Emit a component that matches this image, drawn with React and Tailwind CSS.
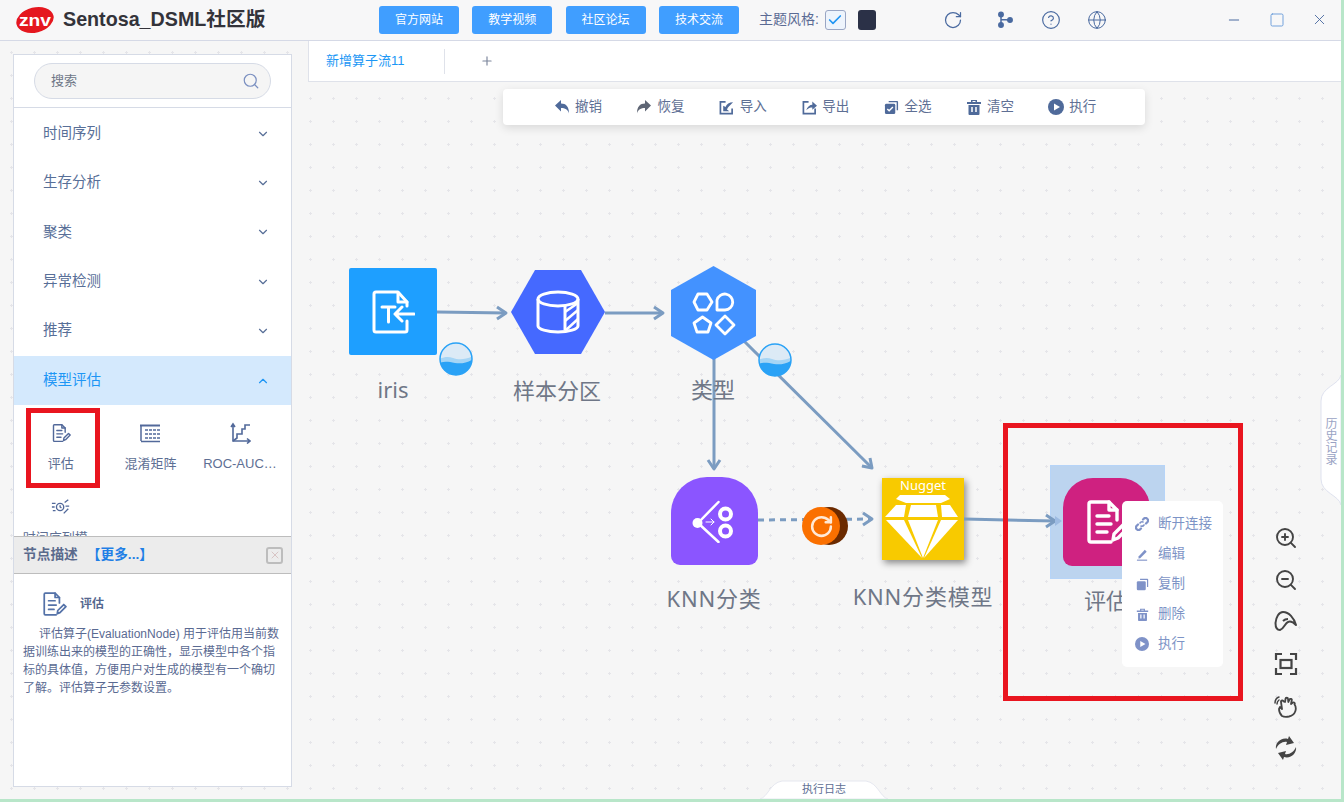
import { ChevronDown, ChevronUp, Search, RotateCw, CircleHelp, Globe, Minus, Square, X, Plus, ZoomIn, ZoomOut, Check } from "lucide-react";

const cjk = "font-['Liberation_Sans','Noto_Sans_CJK_SC',sans-serif]";
const nodeFont = "font-['Noto_Sans','Noto_Sans_CJK_SC',sans-serif]";

function DocEdit({ className, sw = 2, color = "currentColor" }) {
  return (
    <svg viewBox="0 0 24 24" className={className} fill="none" stroke={color} strokeWidth={sw} strokeLinejoin="round" strokeLinecap="round">
      <path d="M17 11V6l-4-4H4a1 1 0 0 0-1 1v18a1 1 0 0 0 1 1h10" />
      <path d="M13 2v4h4M7 9h6M7 13h7M7 17h5" />
      <path d="M15 21l.5-3 5.5-5.500 2 2-5.500 5.500z" />
    </svg>
  );
}

function Ball({ id }) {
  return (
    <svg viewBox="0 0 34 34" className="w-full h-full">
      <defs>
        <clipPath id={id}>
          <circle cx="17" cy="17" r="16" />
        </clipPath>
      </defs>
      <g clipPath={`url(#${id})`}>
        <rect width="34" height="34" fill="#dceaf6" />
        <path d="M0 17c5-2 9-3 14-1s13 2 20-2v20H0z" fill="#a6d5f5" />
        <path d="M0 21c6-2 10-1 16 0s12 0 18-4v17H0z" fill="#2aa2f6" />
      </g>
      <circle cx="17" cy="17" r="16" fill="none" stroke="#2aa2f6" strokeWidth="1.500" />
    </svg>
  );
}

function Label({ children, className = "" }) {
  return <div className={`${nodeFont} text-[22px] leading-[30px] text-[#6f7787] text-center whitespace-nowrap ${className}`}>{children}</div>;
}

function SideRow({ text, open }) {
  return (
    <div className={`h-[49.400px] shrink-0 flex items-center justify-between pl-[29px] pr-[21px] text-[14.500px] ${open ? "bg-[#d4e9fd] text-[#1e96f5]" : "text-[#586f98]"}`}>
      <span>{text}</span>
      {open ? <ChevronUp size={14} /> : <ChevronDown size={14} />}
    </div>
  );
}

function ToolItem({ icon, text }) {
  return (
    <div className="flex items-center w-[82.400px] shrink-0 gap-[5px]">
      <span className="w-[16px] h-[16px] flex items-center justify-center text-[#4f6a9a]">{icon}</span>
      <span className="text-[13.500px] text-[#5e6f94]">{text}</span>
    </div>
  );
}

function MenuItem({ icon, text }) {
  return (
    <div className="h-[30px] flex items-center pl-[13px] gap-[9px] text-[13.500px] text-[#7d94c6]">
      <span className="w-[14px] h-[14px] flex items-center justify-center text-[#7f92c8]">{icon}</span>
      <span>{text}</span>
    </div>
  );
}

function SubItem({ icon, text, labelClass = "w-[74px]" }) {
  return (
    <div className="flex flex-col items-center h-[74px] pt-[17px] overflow-hidden">
      <span className="w-[22px] h-[22px] flex items-center justify-center text-[#52699a]">{icon}</span>
      <span className={`mt-[11px] text-center truncate text-[13px] leading-[18px] text-[#5e6f94] ${labelClass}`}>{text}</span>
    </div>
  );
}

function Edge({ d, dash }) {
  return <path d={d} fill="none" stroke="#7b9cc1" strokeWidth="3" strokeDasharray={dash} />;
}

function Head({ d }) {
  return <path d={d} fill="none" stroke="#7b9cc1" strokeWidth="3" strokeLinejoin="round" />;
}

function TrashIcon({ className }) {
  return (
    <svg viewBox="0 0 16 16" className={className} fill="currentColor">
      <path d="M1 3h14v2H1zM5 3V1h6v2H9.500V2h-3v1zM2.500 6h11v9a1 1 0 0 1-1 1h-9a1 1 0 0 1-1-1z" />
      <path d="M6 8v5M10 8v5" stroke="#fff" strokeWidth="1.500" />
    </svg>
  );
}

function CopyIcon({ className }) {
  return (
    <svg viewBox="0 0 16 16" className={className}>
      <path d="M5 1h9a1 1 0 0 1 1 1v9h-1.500V2.500H5z" fill="currentColor" />
      <rect x="1" y="4" width="11" height="11" rx="1.500" fill="currentColor" />
    </svg>
  );
}

function PlayIcon({ className }) {
  return (
    <svg viewBox="0 0 16 16" className={className}>
      <circle cx="8" cy="8" r="8" fill="currentColor" />
      <polygon points="6,4.500 12,8 6,11.500" fill="#fff" />
    </svg>
  );
}

export default function App() {
  return (
    <div className={`${cjk} w-[1344px] h-[802px] overflow-hidden flex flex-col bg-[#f6f6f6] border-r-[3px] border-b-[3px] border-[#b8e6c9] relative`}>
      {/* header */}
      <div className="h-[41px] shrink-0 flex items-center bg-[#f7f7f8] border-b border-[#d5d9e6] pb-[1px]">
        <svg viewBox="0 0 38 28" className="w-[38px] h-[28px] ml-[16px]">
          <ellipse cx="19" cy="14" rx="19" ry="12.500" transform="rotate(-14 19 14)" fill="#e5171f" />
          <text x="19" y="19.500" textAnchor="middle" fontSize="17" fontWeight="700" fill="#fff" fontFamily="Liberation Sans" textLength="32" lengthAdjust="spacingAndGlyphs">znv</text>
        </svg>
        <div className="ml-[9px] w-[316px] text-[19.700px] font-bold text-[#33333a] whitespace-nowrap">Sentosa_DSML社区版</div>
        <div className="flex gap-[13.300px]">
          {["官方网站", "教学视频", "社区论坛", "技术交流"].map((t) => (
            <div key={t} className="w-[80px] h-[28px] rounded-[3px] bg-[#409eff] flex items-center justify-center text-[12px] text-white">{t}</div>
          ))}
        </div>
        <div className="ml-[20px] text-[14px] text-[#5b6b94] whitespace-nowrap">主题风格:</div>
        <div className="ml-[6px] w-[21px] h-[20px] rounded-[3px] border border-[#9aa6c4] bg-[#eef4fc] flex items-center justify-center">
          <Check size={16} className="text-[#2196f3]" strokeWidth={2.500} />
        </div>
        <div className="ml-[12px] w-[18px] h-[20px] rounded-[3px] bg-[#2b3147]" />
        <div className="ml-[67px] flex items-center text-[#4a6aa0]">
          <RotateCw size={20} strokeWidth={1.500} />
          <svg viewBox="0 0 20 20" className="w-[20px] h-[20px] ml-[32px]" fill="#4a6aa0" stroke="#4a6aa0" strokeWidth="1.500">
            <circle cx="6" cy="4.500" r="2.200" />
            <circle cx="6" cy="15" r="2.200" />
            <circle cx="15" cy="10" r="2.200" />
            <path d="M6 5v10M6 9.500l9 .5" fill="none" />
          </svg>
          <CircleHelp size={20} strokeWidth={1.400} className="ml-[26px]" />
          <Globe size={20} strokeWidth={1.200} className="ml-[26px]" />
        </div>
        <div className="ml-auto flex items-center text-[#4a6aa0]">
          <Minus size={16} strokeWidth={1.500} />
          <Square size={16} strokeWidth={1.300} className="ml-[27px] text-[#5f96d8]" />
          <X size={17} strokeWidth={1.300} className="ml-[26px] mr-[13px]" />
        </div>
      </div>

      {/* body */}
      <div className="flex-1 flex min-h-0 bg-[radial-gradient(#e5e5e9_1.200px,transparent_1.200px)] bg-[size:23px_23px]">
        {/* sidebar */}
        <div className="w-[308px] shrink-0 pl-[13px] pr-[16px] pt-[13px] pb-[12px] flex">
          <div className="w-full flex flex-col bg-white border border-[#d6dbe6] min-h-0">
            <div className="h-[53px] shrink-0 flex items-center pl-[20px] border-b border-[#d6dbe6]">
              <div className="w-[237px] h-[36px] rounded-[18px] bg-[#f5f5f5] border border-[#d6dbe6] flex items-center justify-between pl-[16px] pr-[10px]">
                <span className="text-[13px] text-[#6f7787]">搜索</span>
                <Search size={18} className="text-[#7a8fc0]" strokeWidth={1.600} />
              </div>
            </div>
            <div className="flex-1 min-h-0 overflow-hidden pt-[1px]">
              <SideRow text="时间序列" />
              <SideRow text="生存分析" />
              <SideRow text="聚类" />
              <SideRow text="异常检测" />
              <SideRow text="推荐" />
              <SideRow text="模型评估" open />
              <div className="grid grid-cols-3 pl-[2px] pr-[6px] relative">
                <SubItem text="评估" icon={<DocEdit className="w-[20px] h-[20px]" sw={1.700} />} />
                <SubItem
                  text="混淆矩阵"
                  icon={
                    <svg viewBox="0 0 22 22" className="w-[22px] h-[22px]" fill="none" stroke="currentColor" strokeWidth="1.500">
                      <path d="M1 3.500h20" strokeWidth="2" />
                      <path d="M2 3v16" />
                      <path d="M6 8h15M6 12h15M6 16h15" strokeDasharray="3 1" />
                      <path d="M2 19.500h19" />
                    </svg>
                  }
                />
                <SubItem
                  text="ROC-AUC曲线图"
                  icon={
                    <svg viewBox="0 0 22 22" className="w-[22px] h-[22px]" fill="none" stroke="currentColor" strokeWidth="1.600">
                      <path d="M4 2v17h17M2 5l2-3 2 3M18 16.500l3 2.500-3 2.500" />
                      <path d="M4 19l4-3v-4h5V7h3V3h5" />
                    </svg>
                  }
                />
                <SubItem
                  text="时间序列模型评估"
                  labelClass="w-[80px] ml-[4px]"
                  icon={
                    <svg viewBox="0 0 22 22" className="w-[20px] h-[20px]" fill="none" stroke="currentColor" strokeWidth="1.500">
                      <circle cx="10" cy="11" r="4" />
                      <path d="M10 9v2l1.500 1M1 7h4M1 11h3M2 15h3M15 6l4-3M16 10h4M14 18l5-5" />
                    </svg>
                  }
                />
              </div>
            </div>
            <div className="h-[250px] shrink-0 bg-white flex flex-col">
              <div className="h-[38px] shrink-0 bg-[#ececec] border-y border-[#bdbdbd] flex items-center pl-[9px] pr-[8px] text-[13.700px] font-bold text-[#5a6a8c]">
                <span>节点描述</span>
                <span className="ml-[9px] text-[#1f7fe6]">【更多...】</span>
                <span className="ml-auto w-[17px] h-[17px] rounded-[3px] border-2 border-[#bdbdbd] flex items-center justify-center">
                  <X size={12} className="text-[#d8c4c4]" />
                </span>
              </div>
              <div className="flex items-center pl-[27px] pt-[17px]">
                <DocEdit className="w-[26px] h-[26px] text-[#5472a8]" sw={1.600} />
                <span className="ml-[13px] text-[12px] font-bold text-[#55688f]">评估</span>
              </div>
              <p className="mx-[9px] mt-[8px] text-[12px] leading-[18px] indent-[16px] text-[#5a6a92]">
                评估算子(EvaluationNode) 用于评估用当前数据训练出来的模型的正确性，显示模型中各个指标的具体值，方便用户对生成的模型有一个确切了解。评估算子无参数设置。
              </p>
            </div>
          </div>
        </div>

        {/* right column */}
        <div className="flex-1 min-w-0 flex flex-col">
          <div className="h-[41px] shrink-0 bg-white border-b border-[#dfe2ea] border-l flex items-center">
            <span className="ml-[17px] w-[118px] text-[13px] text-[#1b97f5]">新增算子流11</span>
            <span className="w-px h-[25px] bg-[#dfe2ea]" />
            <Plus size={14} className="ml-[35px] text-[#7c869c]" />
          </div>

          {/* canvas */}
          <div className="flex-1 relative min-h-0">
            <svg viewBox="308 82 1033 717" className="absolute inset-0 w-[1033px] h-[717px]">
              <Edge d="M437 312L506 313" />
              <Head d="M497 307l9 6-9 6" />
              <Edge d="M605 313L663 313" />
              <Head d="M654 307l9 6-9 6" />
              <Edge d="M714 358L714 469" />
              <Head d="M708 460l6 9 6-9" />
              <Edge d="M744 341L872 468" />
              <Head d="M862 466l10 2-2-10" />
              <Edge d="M758 520L872 519" dash="6 5" />
              <Head d="M863 513l9 6-9 6" />
            </svg>

            {/* iris */}
            <div className="absolute left-[-20px] top-[186px] w-[210px] flex flex-col items-center">
              <div className="w-[88px] h-[87px] rounded-[2px] bg-[#1e9fff] flex items-center justify-center">
                <svg viewBox="0 0 44 44" className="w-[44px] h-[44px]" fill="none" stroke="#fff" strokeWidth="3" strokeLinecap="round" strokeLinejoin="round">
                  <path d="M36 16v-4l-9-10H5a2 2 0 0 0-2 2v36a2 2 0 0 0 2 2h29a2 2 0 0 0 2-2v-9" />
                  <path d="M27 3v9h9M11 17h13M17.500 17v15M43 24H24M31 17l-7 7 7 7" />
                </svg>
              </div>
              <Label className="mt-[19px]">iris</Label>
            </div>

            {/* sample partition */}
            <div className="absolute left-[145px] top-[188px] w-[210px] flex flex-col items-center">
              <svg viewBox="0 0 94 84" className="w-[94px] h-[84px]">
                <polygon points="0,42 24,0 70,0 94,42 70,84 24,84" fill="#4569ff" />
                <g fill="none" stroke="#fff" strokeWidth="3">
                  <ellipse cx="47" cy="29" rx="20" ry="7" />
                  <path d="M27 29v27c0 3 9 6 20 6s20-3 20-6V29" />
                  <path d="M54 60V35" />
                  <path d="M54 42l13-9M54 51l13-11M55 60l12-11" strokeWidth="2.500" />
                </g>
              </svg>
              <Label className="mt-[21px] -ml-[2px]">样本分区</Label>
            </div>

            {/* type */}
            <div className="absolute left-[300px] top-[184px] w-[210px] flex flex-col items-center">
              <svg viewBox="0 0 85 94" className="w-[85px] h-[94px]">
                <polygon points="42.500,0 85,24 85,70 42.500,94 0,70 0,24" fill="#4392ff" />
                <g fill="none" stroke="#fff" strokeWidth="2.800" strokeLinejoin="round">
                  <polygon points="27,28 36,28 41,36 36,44 27,44 23,36" />
                  <path d="M46 44V34a8 8 0 1 1 8 10z" />
                  <polygon points="31.500,51 40,57 37,66 26,66 23,57" />
                  <polygon points="54,50 63,59 54,68 45,59" />
                </g>
              </svg>
              <Label className="mt-[14px]">类型</Label>
            </div>

            {/* knn */}
            <div className="absolute left-[301px] top-[395px] w-[210px] flex flex-col items-center">
              <div className="w-[87px] h-[88px] bg-[#8b55ff] rounded-t-[36px] rounded-b-[9px] flex items-center justify-center">
                <svg viewBox="0 0 44 44" className="w-[44px] h-[44px]" fill="none" stroke="#fff" strokeWidth="2.500" strokeLinecap="round">
                  <circle cx="5.500" cy="24" r="5" fill="#fff" stroke="none" />
                  <path d="M6 24L26.500 3M6 24l20.500 19" />
                  <circle cx="33.500" cy="15" r="5.500" strokeWidth="4" />
                  <circle cx="33.500" cy="32" r="5.500" strokeWidth="4" />
                  <path d="M14 23h8M19 20l3 3-3 3" strokeWidth="1" />
                </svg>
              </div>
              <Label className="mt-[18px] tracking-[0.8px]">KNN分类</Label>
            </div>

            {/* restart badge */}
            <div className="absolute left-[494px] top-[425px] w-[46px] h-[38px]">
              <div className="absolute right-0 top-0 w-[38px] h-[38px] rounded-full bg-[#6b2a00]" />
              <div className="absolute left-0 top-0 w-[38px] h-[38px] rounded-full bg-[#fa7000] flex items-center justify-center">
                <RotateCw size={25} strokeWidth={2.400} className="text-[#ffe9d6]" />
              </div>
            </div>

            {/* nugget */}
            <div className="absolute left-[510px] top-[396px] w-[210px] flex flex-col items-center">
              <div className="w-[82px] h-[82px] bg-[#f8ca00] shadow-[2px_3px_7px_rgba(0,0,0,0.45)] flex flex-col items-center">
                <span className="text-[13px] leading-[14px] text-white font-['Noto_Sans',sans-serif]">Nugget</span>
                <svg viewBox="882 492 82 68" className="w-[82px] h-[68px]" fill="#fff">
                  <polygon points="900,495 945,495 950,499 941,503 906,503 896,499" />
                  <polygon points="896,505 906,505 904,517 885,517" />
                  <polygon points="911,505 936,505 938,517 908,517" />
                  <polygon points="941,505 950,505 958,517 942,517" />
                  <polygon points="886,520 904,520 922,558" />
                  <polygon points="908,520 938,520 923,558" />
                  <polygon points="941,520 958,520 924,558" />
                </svg>
              </div>
              <Label className="mt-[21px] tracking-[0.8px]">KNN分类模型</Label>
            </div>

            {/* evaluate, selected */}
            <div className="absolute left-[742px] top-[383px] w-[115px] h-[114px] bg-[#bcd4ef] border border-[#b6d4f8] flex items-center pl-[12px]">
              <div className="w-[87px] h-[88px] bg-[#cf2180] rounded-tl-[30px] rounded-tr-[30px] rounded-bl-[9px] rounded-br-[9px] flex items-center justify-center">
                <DocEdit className="w-[48px] h-[48px] text-white" sw={1.700} />
              </div>
            </div>
            <div className="absolute left-[693px] top-[503px] w-[210px]">
              <Label>评估</Label>
            </div>

            <svg viewBox="308 82 1033 717" className="absolute inset-0 w-[1033px] h-[717px]">
              <Edge d="M964 519L1055 521" />
              <Head d="M1046 515l9 6-9 6" />
              <polygon points="1055,516 1062,521 1055,526" fill="#9dbbe2" />
            </svg>

            {/* balls */}
            <div className="absolute left-[131px] top-[260px] w-[34px] h-[34px]"><Ball id="ball-a" /></div>
            <div className="absolute left-[450px] top-[261px] w-[34px] h-[34px]"><Ball id="ball-b" /></div>

            {/* context menu */}
            <div className="absolute left-[814px] top-[419px] w-[101px] h-[166px] bg-white rounded-[5px] pt-[8px]">
              <MenuItem
                text="断开连接"
                icon={
                  <svg viewBox="0 0 14 14" className="w-[14px] h-[14px]" fill="none" stroke="currentColor" strokeWidth="2.200" strokeLinecap="round">
                    <path d="M8 2.500l1-1a2.500 2.500 0 0 1 3.500 3.500l-1.500 1.500" />
                    <path d="M6 11.500l-1 1A2.500 2.500 0 0 1 1.500 9L3 7.500" />
                    <path d="M5 6a2.500 2.500 0 0 1 3-1M9 8a2.500 2.500 0 0 1-3 1" strokeWidth="1.600" />
                  </svg>
                }
              />
              <MenuItem
                text="编辑"
                icon={
                  <svg viewBox="0 0 14 14" className="w-[13px] h-[13px]" fill="currentColor">
                    <path d="M3 9l6.500-7 2 2-7 7-2 .3z" />
                    <path d="M1 12.500h11v1.200H1z" />
                  </svg>
                }
              />
              <MenuItem text="复制" icon={<CopyIcon className="w-[13px] h-[13px]" />} />
              <MenuItem text="删除" icon={<TrashIcon className="w-[13px] h-[13px]" />} />
              <MenuItem text="执行" icon={<PlayIcon className="w-[14px] h-[14px]" />} />
            </div>

            {/* history tab */}
            <div className="absolute right-0 top-[293px] w-[21px] h-[130px]">
              <svg viewBox="0 0 21 130" className="absolute inset-0 w-[21px] h-[130px]">
                <path d="M21 0C19 10 1 12 1 26v78c0 14 18 16 20 26z" fill="#fff" stroke="#dfe2ef" />
              </svg>
              <span className="absolute left-[4px] top-[42px] [writing-mode:vertical-rl] text-[12px] leading-[12px] text-[#9aa3c4]">历史记录</span>
            </div>

            {/* zoom tools */}
            <div className="absolute left-[966px] top-[444px] flex flex-col gap-[18px] text-[#444444]">
              <ZoomIn size={24} strokeWidth={1.900} />
              <ZoomOut size={24} strokeWidth={1.900} />
              <svg viewBox="0 0 24 24" className="w-[24px] h-[24px]" fill="none" stroke="currentColor" strokeWidth="2" strokeLinejoin="round">
                <path d="M1.500 13C2 7 5 2 9 2c6 0 11 6 13 13-3-3-6-4-8-3-3 1-4 7-8 8-3 0-4.500-3-4.500-7z" />
                <path d="M9 11c2-2 3-2 5-2" />
              </svg>
              <svg viewBox="0 0 24 24" className="w-[24px] h-[24px]" fill="none" stroke="currentColor" strokeWidth="2.200">
                <path d="M2 8V2h6M16 2h6v6M22 16v6h-6M8 22H2v-6" />
                <rect x="6.500" y="8" width="11" height="8" />
              </svg>
              <svg viewBox="0 0 24 24" className="w-[24px] h-[24px]" fill="none" stroke="currentColor" strokeWidth="1.800" strokeLinecap="round" strokeLinejoin="round">
                <path d="M8 22c-2-2-3-4-3-7l1-2 2 2-1-7a1 1 0 0 1 2.500-.5L11 8l.5-3a1.200 1.200 0 0 1 2.500 0l.3 3 1.200-2.500a1.200 1.200 0 0 1 2.200 1L17 10l2-1.500a1.200 1.200 0 0 1 1.500 1.800C23 14 22 21 15 22.500c-3 .5-5 .5-7-.5z" />
                <path d="M1 9c0-3 1.500-5 4-6M3 10c0-2 .5-3 2-4" strokeWidth="1.500" />
              </svg>
              <svg viewBox="0 0 24 24" className="w-[24px] h-[24px]" fill="currentColor">
                <path d="M2 13C1 7 7 1 14 3l1-3 5 7-8 2 1-3C9 5 4 8 2 13zM22 11c1 6-5 12-12 10l-1 3-5-7 8-2-1 3c4 1 9-2 11-7z" />
              </svg>
            </div>

            {/* toolbar */}
            <div className="absolute left-[195px] top-[7px] w-[642px] h-[36px] bg-white rounded-[4px] shadow-[0_3px_10px_rgba(0,0,0,0.12)] flex items-center pl-[51px]">
              <ToolItem
                text="撤销"
                icon={
                  <svg viewBox="0 0 16 16" className="w-[16px] h-[16px]" fill="currentColor">
                    <path d="M1 6.500L7 1v3.500c5 0 8 3 8 10-1-4-4-5.500-8-5.500v3.500z" />
                  </svg>
                }
              />
              <ToolItem
                text="恢复"
                icon={
                  <svg viewBox="0 0 16 16" className="w-[16px] h-[16px] text-[#5f6675]" fill="currentColor">
                    <path d="M15 6.500L9 1v3.500c-5 0-8 3-8 10 1-4 4-5.500 8-5.500v3.500z" />
                  </svg>
                }
              />
              <ToolItem
                text="导入"
                icon={
                  <svg viewBox="0 0 16 16" className="w-[15px] h-[15px]" fill="none" stroke="currentColor" strokeWidth="1.800">
                    <path d="M7 2H1.500v12.500H14V9" />
                    <path d="M15 2.500c-4 0-7 2-8 5L4.500 6v6H11L8.500 10c1-2 3-4 6.500-7.500z" fill="currentColor" stroke="none" />
                  </svg>
                }
              />
              <ToolItem
                text="导出"
                icon={
                  <svg viewBox="0 0 16 16" className="w-[15px] h-[15px]" fill="none" stroke="currentColor" strokeWidth="1.800">
                    <path d="M7 2H1.500v12.500H14V9" />
                    <path d="M4.500 11c1-4 4-6 6.500-6V1.500l5 4.500-5 4.500V8c-2 0-4.500 .5-6.500 3z" fill="currentColor" stroke="none" />
                  </svg>
                }
              />
              <ToolItem
                text="全选"
                icon={
                  <svg viewBox="0 0 16 16" className="w-[15px] h-[15px]">
                    <path d="M5 1h9a1 1 0 0 1 1 1v9h-1.500V2.500H5z" fill="currentColor" />
                    <rect x="1" y="4" width="11" height="11" rx="1.500" fill="currentColor" />
                    <path d="M3.500 9.500l2 2 4-4" fill="none" stroke="#fff" strokeWidth="1.500" />
                  </svg>
                }
              />
              <ToolItem text="清空" icon={<TrashIcon className="w-[16px] h-[16px]" />} />
              <ToolItem text="执行" icon={<PlayIcon className="w-[16px] h-[16px]" />} />
            </div>

            {/* bottom log tab */}
            <div className="absolute left-[452px] bottom-0 w-[128px] h-[19px] flex items-center justify-center">
              <svg viewBox="0 0 128 19" className="absolute inset-0 w-[128px] h-[19px]">
                <path d="M0 19C8 17 10 3 22 1h84c12 2 14 16 22 18z" fill="#fff" stroke="#e6e8f0" />
              </svg>
              <span className="relative text-[11px] text-[#5e6f94]">执行日志</span>
            </div>
          </div>
        </div>
      </div>

      {/* red annotation boxes */}
      <div className="absolute left-[26px] top-[408px] w-[74px] h-[80px] border-[5px] border-[#e9151f]" />
      <div className="absolute left-[1003px] top-[423px] w-[240px] h-[278px] border-[5px] border-[#e9151f]" />
    </div>
  );
}
